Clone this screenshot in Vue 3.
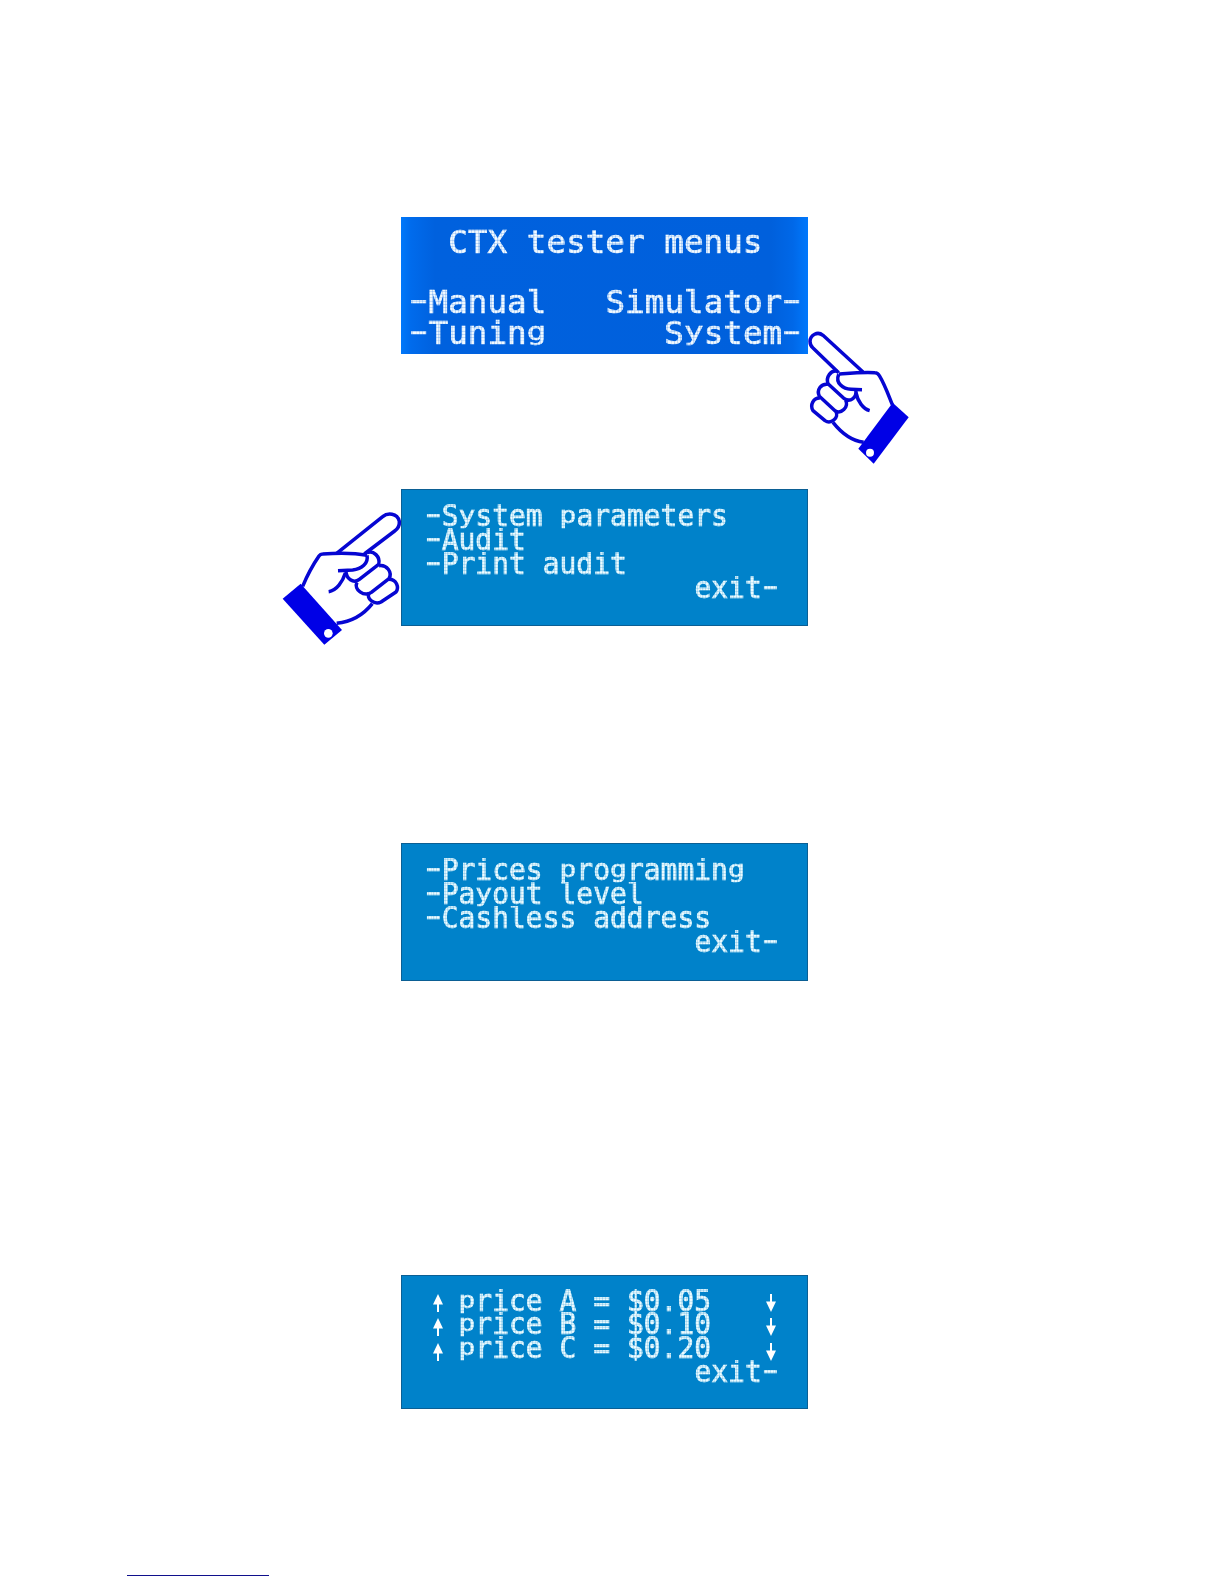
<template>
  <main class="page">
    <section
      v-for="screen in screens"
      :key="screen.id"
      class="lcd"
      :class="'lcd-' + screen.id"
    >
      <div v-for="(row, i) in screen.rows" :key="i" class="row">
        <span class="text"><span v-for="(run, j) in split(row.left)" :key="j" :class="run.kind">{{ run.text }}</span></span>
        <span class="text"><span v-for="(run, j) in split(row.right)" :key="j" :class="run.kind">{{ run.text }}</span></span>
      </div>

      <template v-if="screen.id === 'price'">
        <div v-for="side in ['up', 'down']" :key="side" class="arrows" :class="side">
          <svg v-for="n in 3" :key="n" viewBox="0 0 12 20">
            <path d="M6 1 L11 11.5 H7 V19 H5 V11.5 H1 Z" />
          </svg>
        </div>
      </template>

      <!-- hand pointing at "System" -->
      <svg v-if="screen.id === 'main'" class="hand hand-right" viewBox="0 0 375 450">
        <g class="outline">
          <path d="M204 156 L84 46 C68 33 46 44 45 64 C45 72 48 79 54 84 L131 158" />
          <path d="M131 162 C150 163 170 156 240 158 Q248 158 253 167 C270 195 282 230 292 254" />
          <path d="M131 163 C120 190 145 207 168 208 L201 209" />
          <path d="M127 154 C108 148 92 172 99 191 L148 236 C165 248 188 232 182 209" />
          <path d="M99 193 C78 190 64 210 73 229 L120 272 C138 284 162 262 152 240" />
          <path d="M75 234 C55 233 44 255 54 272 L90 302 C108 314 134 292 122 274" />
          <path d="M183 218 C188 245 205 267 224 272" />
          <path d="M114 307 C140 340 170 362 206 367" />
        </g>
        <path class="cuff" d="M293 248 L341 292 L236 431 L190 386 Z" />
        <circle class="button" cx="225" cy="398" r="12" />
      </svg>

      <!-- hand pointing at "System parameters" -->
      <svg v-if="screen.id === 'system'" class="hand hand-left" viewBox="0 0 420 450">
        <g class="outline">
          <path d="M200 160 L338 50 C352 38 382 38 388 64 C389 78 385 85 374 93 L283 162" />
          <path d="M291 166 C260 160 200 159 158 162 Q151 162 147 168 C125 200 110 230 98 259" />
          <path d="M291 166 C296 190 275 207 248 210 L204 212" />
          <path d="M291 158 C310 150 332 170 326 193 L268 238 C250 252 228 236 228 214" />
          <path d="M327 197 C350 193 368 217 357 236 L304 277 C282 292 250 268 261 247" />
          <path d="M357 238 C380 238 388 262 378 276 L333 306 C315 316 286 297 298 278" />
          <path d="M226 219 C218 245 200 272 176 275" />
          <path d="M307 311 C280 345 240 366 200 370" />
        </g>
        <path class="cuff" d="M92 251 L216 390 L163 434 L38 296 Z" />
        <circle class="button" cx="175" cy="400" r="13" />
      </svg>
    </section>
    <div class="link-line"></div>
  </main>
</template>

<script setup>
const screens = [
  {
    id: 'main',
    rows: [
      { left: '  CTX tester menus', right: '' },
      { left: ' ', right: '' },
      { left: '-Manual', right: 'Simulator-' },
      { left: '-Tuning', right: 'System-' }
    ]
  },
  {
    id: 'system',
    rows: [
      { left: '-System parameters', right: '' },
      { left: '-Audit', right: '' },
      { left: '-Print audit', right: '' },
      { left: '', right: 'exit-' }
    ]
  },
  {
    id: 'params',
    rows: [
      { left: '-Prices programming', right: '' },
      { left: '-Payout level', right: '' },
      { left: '-Cashless address', right: '' },
      { left: '', right: 'exit-' }
    ]
  },
  {
    id: 'price',
    rows: [
      { left: '  price A = $0.05', right: '' },
      { left: '  price B = $0.10', right: '' },
      { left: '  price C = $0.20', right: '' },
      { left: '', right: 'exit-' }
    ]
  }
]

// 5x7 LCD cells have no descenders, so g, p and y are squeezed onto the baseline;
// the dash fills its whole cell
const kindOf = (part) => {
  if (part === '-') return 'dash'
  return /^[gpy]$/.test(part) ? 'low' : ''
}

const split = (text) =>
  text
    .split(/([gpy-])/)
    .filter((part) => part !== '')
    .map((part) => ({ text: part, kind: kindOf(part) }))
</script>

<style>
body {
  margin: 0;
  background: #fff;
}
</style>

<style scoped>
.page {
  box-sizing: border-box;
  width: 1224px;
  height: 1584px;
  padding-top: 217px;
  display: flex;
  flex-direction: column;
  overflow: hidden;
  background: #fff;
}

.lcd {
  --base: 21.7px;
  --dot: 2.81px;
  position: relative;
  box-sizing: border-box;
  flex: none;
  width: 407px;
  height: 137px;
  margin-left: 401px;
  padding: 14.8px 28.4px 0 22.8px;
  border: 1px solid #0b5f94;
  background: #0082ca;
  color: #ecfbff;
  font: 27.97px/24px "DejaVu Sans Mono", monospace;
}

.lcd-main {
  --base: 26.5px;
  --dot: 3.275px;
  padding: 9.6px 6.1px 0 7.9px;
  border: 0;
  background: linear-gradient(90deg, #0078fa 0, #006bec 10px, #0061de 34px, #0060dc 370px, #0068e8 392px, #0078fc 100%);
  color: #f2faff;
  font-size: 32.64px;
  line-height: 30.4px;
}

.lcd-system {
  margin-top: 135px;
}

.lcd-params {
  height: 138px;
  margin-top: 217px;
}

.lcd-price {
  height: 134px;
  margin-top: 294px;
  padding-top: 13.8px;
  line-height: 23.7px;
}

.row {
  display: flex;
  justify-content: space-between;
  height: 1lh;
  white-space: pre;
  transform: scaleY(1.05);
  transform-origin: 0 var(--base);
}

.lcd-main .row {
  transform: none;
}

/* faint gaps between the LCD dots */
.text {
  -webkit-text-stroke: 0.7px currentColor;
  mask-image:
    repeating-linear-gradient(90deg, rgba(0, 0, 0, 0.8) 0 0.7px, #000 1.2px var(--dot)),
    repeating-linear-gradient(0deg, rgba(0, 0, 0, 0.8) 0 0.7px, #000 1.2px var(--dot));
  mask-composite: intersect;
}

.low,
.dash {
  display: inline-block;
}

.low {
  transform: scaleY(0.78);
  transform-origin: 0 calc(var(--base) - 0.55em);
}

.dash {
  transform: translateY(-0.05em) scaleX(1.65);
}

.arrows {
  position: absolute;
  top: 16.8px;
  display: flex;
  flex-direction: column;
  gap: 4.6px;
}

.arrows svg {
  display: block;
  width: 12px;
  height: 20px;
  fill: #fff;
}

.up {
  left: 29.7px;
}

.down {
  left: 363.3px;
}

.down svg {
  transform: scaleY(-1);
}

.hand {
  position: absolute;
  overflow: visible;
}

.hand-right {
  left: 394px;
  top: 103px;
  width: 125px;
  height: 150px;
}

.hand-left {
  left: -132px;
  top: 10px;
  width: 140px;
  height: 150px;
}

.outline {
  fill: none;
  stroke: #0606d2;
  stroke-width: 10.5;
  stroke-linejoin: round;
}

.cuff {
  fill: #0000e6;
}

.button {
  fill: #fff;
}

.link-line {
  flex: none;
  width: 142px;
  height: 1px;
  margin: 166px 0 0 127px;
  background: #10108c;
}
</style>
